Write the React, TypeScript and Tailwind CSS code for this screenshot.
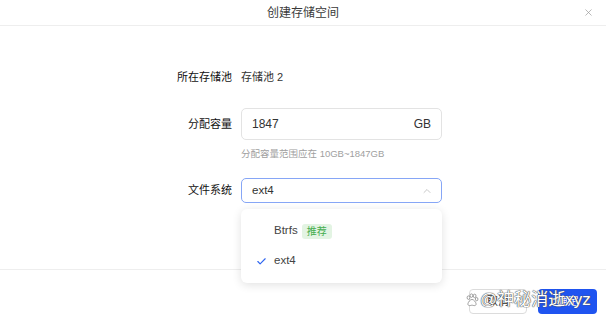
import { Check, ChevronUp, X } from 'lucide-react';

const FONT = '[font-family:"Liberation_Sans","Noto_Sans_CJK_SC",sans-serif]';

function BaiduPaw() {
  return (
    <svg width="14" height="14" viewBox="0 0 24 24" fill="white" stroke="#8a8a8a" strokeWidth="1.4">
      <ellipse cx="6" cy="8" rx="2.4" ry="3" />
      <ellipse cx="11" cy="4.5" rx="2.4" ry="3" />
      <ellipse cx="16.5" cy="5" rx="2.4" ry="3" />
      <ellipse cx="20" cy="10.5" rx="2.2" ry="2.8" />
      <path d="M12 11c-3 0-6.5 4.5-7 7.5-.4 2.6 2 3.5 4 3 1.5-.3 2-.6 3-.6s1.5.3 3 .6c2 .5 4.4-.4 4-3-.5-3-4-7.5-7-7.5z" />
    </svg>
  );
}

export default function App() {
  return (
    <div className={`relative w-[606px] h-[323px] overflow-hidden bg-white text-[#333] ${FONT}`}>
      {/* Header */}
      <div className="relative flex h-[26px] items-center justify-center border-b border-[#eeeeee]">
        <span className="text-[12px] text-[#3a3a3a]">创建存储空间</span>
        <X className="absolute right-[12px] top-[7px] h-[11px] w-[11px] text-[#999]" strokeWidth={1.5} />
      </div>

      {/* Body */}
      <div className="h-[243px] pt-[41px]">
        <div className="grid grid-cols-[232px_201px] items-center gap-x-[9px]">
          <div className="text-right text-[11px] leading-[20px] text-[#111]">所在存储池</div>
          <div className="text-[11px] leading-[20px]">存储池 2</div>
        </div>

        <div className="mt-[21px] grid grid-cols-[232px_201px] items-start gap-x-[9px]">
          <div className="pt-[8px] text-right text-[11px] leading-[16px] text-[#111]">分配容量</div>
          <div>
            <div className="flex h-[32px] items-center justify-between rounded-[5px] border border-[#e3e3e3] px-[10px] text-[12px]">
              <span>1847</span>
              <span>GB</span>
            </div>
            <div className="mt-[7px] text-[9.5px] leading-[14px] text-[#a0a0a0]">分配容量范围应在 10GB~1847GB</div>
          </div>
        </div>

        <div className="mt-[17px] grid grid-cols-[232px_201px] items-center gap-x-[9px]">
          <div className="text-right text-[11px] text-[#111]">文件系统</div>
          <div className="relative">
            <div className="flex h-[25px] items-center justify-between rounded-[5px] border border-[#86a6f6] pl-[10px] pr-[8px] text-[11.5px]">
              <span>ext4</span>
              <ChevronUp className="h-[12px] w-[12px] text-[#b5b5b5]" strokeWidth={1.5} />
            </div>
            {/* Dropdown */}
            <div className="absolute left-0 top-[31px] z-10 h-[74px] w-[201px] rounded-[6px] bg-white pt-[14px] shadow-[0_2px_10px_rgba(0,0,0,0.12)]">
              <div className="flex h-[16px] items-center pl-[33px] text-[11.5px] text-[#444]">
                <span>Btrfs</span>
                <span className="ml-[4px] rounded-[3px] bg-[#e3f4e3] px-[5px] py-[1px] text-[10px] leading-[13px] text-[#45ad4f]">推荐</span>
              </div>
              <div className="mt-[14px] flex h-[16px] items-center pl-[15px] text-[11.5px] text-[#444]">
                <Check className="mr-[7px] h-[11px] w-[11px] text-[#2f66f0]" strokeWidth={2.5} />
                <span>ext4</span>
              </div>
            </div>
          </div>
        </div>
      </div>

      {/* Footer */}
      <div className="flex justify-end gap-[11px] border-t border-[#eeeeee] pr-[9px] pt-[19px]">
        <button className="h-[25px] w-[58px] rounded-[4px] border border-[#dcdcdc] bg-white text-[11px] text-[#333]">取消</button>
        <button className="h-[25px] w-[59px] rounded-[4px] bg-[#1f54f0] text-[11px] text-white">确定</button>
      </div>

      {/* Watermark */}
      <div className="absolute left-[465px] top-[290px] flex items-center gap-[1px] text-[17px] leading-[20px] text-white [text-shadow:0_0_1px_#555,0_0_1px_#555,0_0_1px_#555]">
        <BaiduPaw />
        <span>@神秘消逝xyz</span>
      </div>
    </div>
  );
}
